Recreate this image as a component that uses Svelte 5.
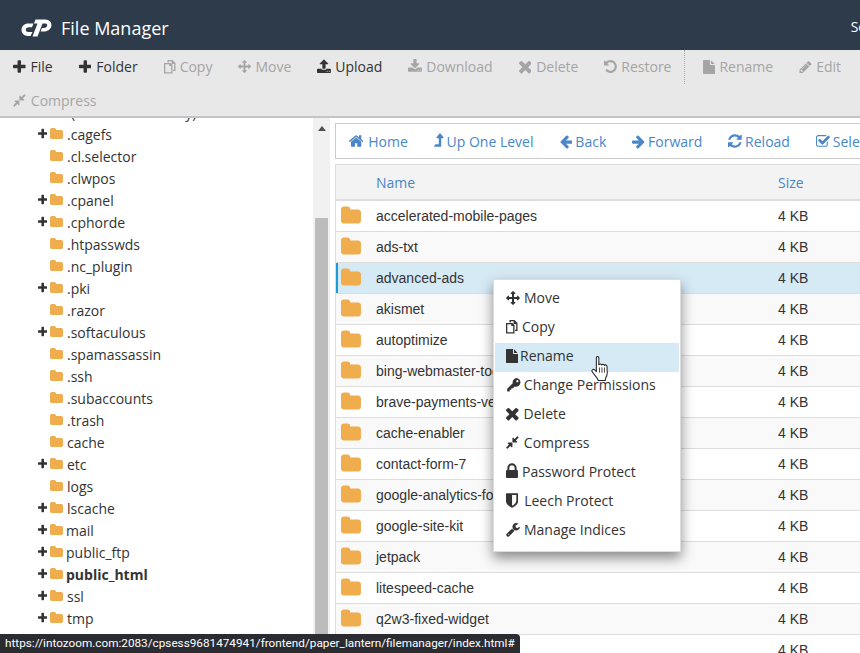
<script lang="ts">
	// font-awesome style glyphs, viewbox cropped to the glyph's own width
	const icons: Record<string, { d: string; x: number; w: number }> = {
		plus: { x: 192, w: 1408, d: 'M1600 736v192q0 40-28 68t-68 28h-416v416q0 40-28 68t-68 28h-192q-40 0-68-28t-28-68v-416h-416q-40 0-68-28t-28-68v-192q0-40 28-68t68-28h416v-416q0-40 28-68t68-28h192q40 0 68 28t28 68v416h416q40 0 68 28t28 68z' },
		times: { x: 302, w: 1188, d: 'M1490 1322q0 40-28 68l-136 136q-28 28-68 28t-68-28l-294-294-294 294q-28 28-68 28t-68-28l-136-136q-28-28-28-68t28-68l294-294-294-294q-28-28-28-68t28-68l136-136q28-28 68-28t68 28l294 294 294-294q28-28 68-28t68 28l136 136q28 28 28 68t-28 68l-294 294 294 294q28 28 28 68z' },
		folder: { x: 64, w: 1664, d: 'M1728 608v704q0 92-66 158t-158 66h-1216q-92 0-158-66t-66-158v-960q0-92 66-158t158-66h320q92 0 158 66t66 158v32h672q92 0 158 66t66 158z' },
		left: { x: 128, w: 1536, d: 'M1664 896v128q0 53-32.5 90.5t-84.5 37.5h-704l293 294q38 36 38 90t-38 90l-75 76q-37 37-90 37-52 0-91-37l-651-652q-37-37-37-90 0-52 37-91l651-650q38-38 91-38 52 0 90 38l75 74q38 38 38 91t-38 91l-293 293h704q52 0 84.5 37.5t32.5 90.5z' },
		right: { x: 128, w: 1536, d: 'M1600 960q0 54-37 91l-651 651q-39 37-91 37-51 0-90-37l-75-75q-38-38-38-91t38-91l293-293h-704q-52 0-84.5-37.5t-32.5-90.5v-128q0-53 32.5-90.5t84.5-37.5h704l-293-294q-38-36-38-90t38-90l75-75q38-38 90-38 53 0 91 38l651 651q37 35 37 90z' },
		refresh: { x: 128, w: 1536, d: 'M1639 1056q0 5-1 7-64 268-268 434.5t-478 166.5q-146 0-282.5-55t-243.5-157l-129 129q-19 19-45 19t-45-19-19-45v-448q0-26 19-45t45-19h448q26 0 45 19t19 45-19 45l-137 137q71 66 161 102t187 36q134 0 250-65t186-179q11-17 53-117 8-23 30-23h192q13 0 22.5 9.5t9.5 22.5zm25-800v448q0 26-19 45t-45 19h-448q-26 0-45-19t-19-45 19-45l138-138q-148-137-349-137-134 0-250 65t-186 179q-11 17-53 117-8 23-30 23h-199q-13 0-22.5-9.5t-9.5-22.5v-7q65-268 270-434.5t480-166.5q146 0 284 55.5t245 156.5l130-129q19-19 45-19t45 19 19 45z' },
		home: { x: 96, w: 1600, d: 'M1472 992v480q0 26-19 45t-45 19h-384v-384h-256v384h-384q-26 0-45-19t-19-45v-480q0-1 .5-3t.5-3l575-474 575 474q1 2 1 6zm223-69l-62 74q-8 9-21 11h-3q-13 0-21-7l-692-577-692 577q-12 8-24 7-13-2-21-11l-62-74q-8-10-7-23.5t11-21.5l719-599q32-26 76-26t76 26l244 204v-195q0-14 9-23t23-9h192q14 0 23 9t9 23v408l219 182q10 8 11 21.5t-7 23.5z' },
		lock: { x: 320, w: 1152, d: 'M640 768h512v-192q0-106-75-181t-181-75-181 75-75 181v192zm832 96v576q0 40-28 68t-68 28h-960q-40 0-68-28t-28-68v-576q0-40 28-68t68-28h32v-192q0-184 132-316t316-132 316 132 132 316v192h32q40 0 68 28t28 68z' },
		file: { x: 128, w: 1536, d: 'M1152 512v-472q22 14 36 28l408 408q14 14 28 36h-472zm-128 32q0 40 28 68t68 28h544v1056q0 40-28 68t-68 28h-1344q-40 0-68-28t-28-68v-1600q0-40 28-68t68-28h800v544z' },
		arrows: { x: 0, w: 1792, d: 'M1792 896q0 26-19 45l-256 256q-19 19-45 19t-45-19-19-45v-128h-384v384h128q26 0 45 19t19 45-19 45l-256 256q-19 19-45 19t-45-19l-256-256q-19-19-19-45t19-45 45-19h128v-384h-384v128q0 26-19 45t-45 19-45-19l-256-256q-19-19-19-45t19-45l256-256q19-19 45-19t45 19 19 45v128h384v-384h-128q-26 0-45-19t-19-45 19-45l256-256q19-19 45-19t45 19l256 256q19 19 19 45t-19 45-45 19h-128v384h384v-128q0-26 19-45t45-19 45 19l256 256q19 19 19 45z' },
		pencil: { x: 64, w: 1664, d: 'M491 1536l91-91-235-235-91 91v107h128v128h107zm523-928q0-22-22-22-10 0-17 7l-542 542q-7 7-7 17 0 22 22 22 10 0 17-7l542-542q7-7 7-17zm-54-192l416 416-832 832h-416v-416zm683 96q0 53-37 90l-166 166-416-416 166-165q36-38 90-38 53 0 91 38l235 234q37 39 37 91z' },
		undo: { x: 128, w: 1536, d: 'M1664 896q0 156-61 298t-164 245-245 164-298 61q-172 0-327-72.5t-264-204.5q-7-10-6.5-22.5t8.5-20.5l137-138q10-9 25-9 16 2 23 12 73 95 179 147t225 52q104 0 198.5-40.5t163.5-109.5 109.5-163.5 40.5-198.5-40.5-198.5-109.5-163.5-163.5-109.5-198.5-40.5q-98 0-188 35.5t-160 101.5l137 138q31 30 14 69-17 40-59 40h-448q-26 0-45-19t-19-45v-448q0-42 40-59 39-17 69 14l130 129q107-101 244.5-156.5t284.5-55.5q156 0 298 61t245 164 164 245 61 298z' },
		compress: { x: 128, w: 1536, d: 'M896 960v448q0 26-19 45t-45 19-45-19l-144-144-332 332q-10 10-23 10t-23-10l-114-114q-10-10-10-23t10-23l332-332-144-144q-19-19-19-45t19-45 45-19h448q26 0 45 19t19 45zm755-672q0 13-10 23l-332 332 144 144q19 19 19 45t-19 45-45 19h-448q-26 0-45-19t-19-45v-448q0-26 19-45t45-19 45 19l144 144 332-332q10-10 23-10t23 10l114 114q10 10 10 23z' },
		key: { x: 64, w: 1664, d: 'M1200 120a480 480 0 1 1-160 932l-200 200h-180v180h-180v180H200v-290l620-620A480 480 0 0 1 1200 120zM1340 340a120 120 0 1 0 .1 0z' },
		wrench: { x: 64, w: 1664, d: 'M448 1472q0-26-19-45t-45-19-45 19-19 45 19 45 45 19 45-19 19-45zm644-420l-682 682q-37 37-90 37-52 0-91-37l-106-108q-38-36-38-90 0-53 38-91l681-681q39 98 114.5 173.5t173.5 114.5zm634-435q0 39-23 106-47 134-164.5 217.5t-258.5 83.5q-185 0-316.5-131.5t-131.5-316.5 131.5-316.5 316.5-131.5q58 0 121.5 16.5t107.5 46.5q16 11 16 28t-16 28l-293 169v224l193 107q5-3 79-48.5t135.5-81 70.5-35.5q15 0 23.5 10t8.5 25z' },
		shield: { x: 256, w: 1280, d: 'M1344 960v-640h-448v1137q119-63 213-137 235-184 235-360zm192-768v768q0 86-33.5 170.5t-83 150-118 127.5-126.5 103-121 77.5-89.5 49.5-42.5 20q-12 6-26 6t-26-6q-16-7-42.5-20t-89.5-49.5-121-77.5-126.5-103-118-127.5-83-150-33.5-170.5v-768q0-26 19-45t45-19h1152q26 0 45 19t19 45z' },
		upload: { x: 64, w: 1664, d: 'M1344 1472q0-26-19-45t-45-19-45 19-19 45 19 45 45 19 45-19 19-45zm256 0q0-26-19-45t-45-19-45 19-19 45 19 45 45 19 45-19 19-45zm128-224v320q0 40-28 68t-68 28h-1472q-40 0-68-28t-28-68v-320q0-40 28-68t68-28h427q21 56 70.5 92t110.5 36h256q61 0 110.5-36t70.5-92h427q40 0 68 28t28 68zm-325-648q-17 40-59 40h-256v448q0 26-19 45t-45 19h-256q-26 0-45-19t-19-45v-448h-256q-42 0-59-40-17-39 14-69l448-448q18-19 45-19t45 19l448 448q31 30 14 69z' },
		download: { x: 64, w: 1664, d: 'M1344 1344q0-26-19-45t-45-19-45 19-19 45 19 45 45 19 45-19 19-45zm256 0q0-26-19-45t-45-19-45 19-19 45 19 45 45 19 45-19 19-45zm128-224v320q0 40-28 68t-68 28h-1472q-40 0-68-28t-28-68v-320q0-40 28-68t68-28h465l135 136q58 56 136 56t136-56l136-136h464q40 0 68 28t28 68zm-325-569q17 41-14 70l-448 448q-18 19-45 19t-45-19l-448-448q-31-29-14-70 17-39 59-39h256v-448q0-26 19-45t45-19h256q26 0 45 19t19 45v448h256q42 0 59 39z' },
		levelup: { x: 384, w: 1024, d: 'M1395 508q-17 36-58 36h-192v864q0 14-9 23t-23 9h-704q-21 0-29-18-8-20 4-35l160-192q9-11 25-11h320v-640h-192q-40 0-58-37-17-37 9-68l320-384q18-22 49-22t49 22l320 384q27 32 9 69z' },
		check: { x: 64, w: 1664, d: 'M1472 930v318q0 119-84.5 203.5t-203.5 84.5h-832q-119 0-203.5-84.5t-84.5-203.5v-832q0-119 84.5-203.5t203.5-84.5h832q63 0 117 25 15 7 18 23 3 17-9 29l-49 49q-10 10-23 10-3 0-9-2-23-6-45-6h-832q-66 0-113 47t-47 113v832q0 66 47 113t113 47h832q66 0 113-47t47-113v-254q0-13 9-22l64-64q10-10 23-10 6 0 12 3 20 8 20 29zm231-489l-814 814q-24 24-57 24t-57-24l-430-430q-24-24-24-57t24-57l110-110q24-24 57-24t57 24l263 263 647-647q24-24 57-24t57 24l110 110q24 24 24 57t-24 57z' },
		copy: { x: 0, w: 1536, d: 'M0 384h830l256 256v1088H0zM166 550v1012h754V770H670V550zM448 0h640l384 384v1024h-320v-166h154V500H976V166H614v154H448z' }
	};

	const tools = [
		{ icon: 'plus', label: 'File', h: 16, gap: 5, on: true },
		{ icon: 'plus', label: 'Folder', h: 16, gap: 5, on: true },
		{ icon: 'copy', label: 'Copy', h: 14, gap: 4 },
		{ icon: 'arrows', label: 'Move', h: 13, gap: 4 },
		{ icon: 'upload', label: 'Upload', h: 15, gap: 4, on: true },
		{ icon: 'download', label: 'Download', h: 15, gap: 4 },
		{ icon: 'times', label: 'Delete', h: 19, gap: 5 },
		{ icon: 'undo', label: 'Restore', h: 15, gap: 4, sep: true },
		{ icon: 'file', label: 'Rename', h: 14, gap: 4 },
		{ icon: 'pencil', label: 'Edit', h: 14, gap: 4 },
		{ icon: 'compress', label: 'Compress', h: 15, gap: 5 }
	];

	const nav = [
		{ icon: 'home', label: 'Home', h: 16, gap: 5 },
		{ icon: 'levelup', label: 'Up One Level', h: 17, gap: 3 },
		{ icon: 'left', label: 'Back', h: 15, gap: 3 },
		{ icon: 'right', label: 'Forward', h: 15, gap: 3 },
		{ icon: 'refresh', label: 'Reload', h: 16, gap: 3 },
		{ icon: 'check', label: 'Select All', h: 15, gap: 3 }
	];

	const tree = [
		{ name: '(/home/intozoomy)', cut: true },
		{ name: '.cagefs', plus: true },
		{ name: '.cl.selector' },
		{ name: '.clwpos' },
		{ name: '.cpanel', plus: true },
		{ name: '.cphorde', plus: true },
		{ name: '.htpasswds' },
		{ name: '.nc_plugin' },
		{ name: '.pki', plus: true },
		{ name: '.razor' },
		{ name: '.softaculous', plus: true },
		{ name: '.spamassassin' },
		{ name: '.ssh' },
		{ name: '.subaccounts' },
		{ name: '.trash' },
		{ name: 'cache' },
		{ name: 'etc', plus: true },
		{ name: 'logs' },
		{ name: 'lscache', plus: true },
		{ name: 'mail', plus: true, tight: true },
		{ name: 'public_ftp', plus: true, tight: true },
		{ name: 'public_html', plus: true, tight: true, bold: true },
		{ name: 'ssl', plus: true },
		{ name: 'tmp', plus: true }
	];

	const files = [
		'accelerated-mobile-pages',
		'ads-txt',
		'advanced-ads',
		'akismet',
		'autoptimize',
		'bing-webmaster-tools',
		'brave-payments-verified',
		'cache-enabler',
		'contact-form-7',
		'google-analytics-for-wp',
		'google-site-kit',
		'jetpack',
		'litespeed-cache',
		'q2w3-fixed-widget',
		'really-simple-ssl'
	];

	const menu = [
		{ icon: 'arrows', label: 'Move', h: 14, gap: 4 },
		{ icon: 'copy', label: 'Copy', h: 14, gap: 4 },
		{ icon: 'file', label: 'Rename', h: 14, gap: 2, active: true },
		{ icon: 'key', label: 'Change Permissions', h: 16, gap: 3 },
		{ icon: 'times', label: 'Delete', h: 19, gap: 5 },
		{ icon: 'compress', label: 'Compress', h: 15, gap: 5 },
		{ icon: 'lock', label: 'Password Protect', h: 18.6, gap: 4 },
		{ icon: 'shield', label: 'Leech Protect', h: 17, gap: 6 },
		{ icon: 'wrench', label: 'Manage Indices', h: 15, gap: 4 }
	];
</script>

{#snippet glyph(name: string, h: number)}
	<svg
		class="glyph"
		width={(icons[name].w / 1792) * h}
		height={h}
		viewBox="{icons[name].x} 0 {icons[name].w} 1792"
		fill="currentColor"
		aria-hidden="true"
	>
		<path d={icons[name].d} />
	</svg>
{/snippet}

<div class="page">
	<header class="top">
		<svg class="logo" width="31" height="18" viewBox="0 0 31 18" fill="#fff" aria-hidden="true">
			<path d="M12.500 4.500H7.500C3.500 4.500.5 7.200.5 10.800.5 14.500 3.200 17 7 17h2.500l2-4H7.300C5.500 13 4.600 12 4.800 10.600 5 9.200 6.200 8.300 8 8.300h3z" />
			<path d="M14.500.5H24c4.500 0 7 3 6.400 6.500C29.800 10 27 12.500 23 12.500h-3.500L21 9h2c1.700 0 3-1 3.200-2.500.2-1.500-.9-2-2.200-2h-2.500l-5 13h-5l5-13H13z" />
		</svg>
		<h1>File Manager</h1>
		<span class="search">Search</span>
	</header>

	<div class="toolbar">
		{#each tools as t}
			<button class="tool" class:on={t.on}>
				<span class="ticon" style="margin-right: {t.gap}px">{@render glyph(t.icon, t.h)}</span>
				<span>{t.label}</span>
			</button>
			{#if t.sep}
				<i class="sep"></i>
			{/if}
		{/each}
	</div>

	<div class="main">
		<aside class="tree">
			<ul>
				{#each tree as f}
					<li class:bold={f.bold} class:tight={f.tight}>
						<span class="toggle">
							{#if f.plus}
								{@render glyph('plus', 12)}
							{/if}
						</span>
						{#if !f.cut}
							<span class="tfolder">{@render glyph('folder', 14)}</span>
						{/if}
						<span class="tname" class:cut={f.cut}>{f.name}</span>
					</li>
				{/each}
			</ul>
		</aside>
		<div class="scrollbar">
			<i class="arrow"></i>
			<i class="thumb"></i>
		</div>

		<section class="content">
			<nav class="navbar">
				{#each nav as n}
					<a href="#nav">
						<span class="ticon" style="margin-right: {n.gap}px">{@render glyph(n.icon, n.h)}</span>
						<span>{n.label}</span>
					</a>
				{/each}
			</nav>
			<table>
				<thead>
					<tr>
						<th class="ci"></th>
						<th class="cn">Name</th>
						<th>Size</th>
					</tr>
				</thead>
				<tbody>
					{#each files as name, i}
						<tr class:picked={name === 'advanced-ads'} class:odd={i % 2 == 1}>
							<td class="ci">{@render glyph('folder', 21.5)}</td>
							<td class="cn">{name}</td>
							<td>4 KB</td>
						</tr>
					{/each}
				</tbody>
			</table>
		</section>
	</div>

	<ul class="menu">
		{#each menu as m}
			<li class:active={m.active}>
				<span class="ticon" style="margin-right: {m.gap}px">{@render glyph(m.icon, m.h)}</span>
				{m.label}
			</li>
		{/each}
	</ul>

	<svg class="cursor" width="19" height="26" viewBox="0 0 18 25" aria-hidden="true">
		<path
			d="M5 1.500c0-1.300 2.400-1.300 2.400 0v7c.2-1 2.600-1.100 2.700.2.200-1 2.500-1 2.600.4.400-.9 2.400-.7 2.500.8l.3 5.500c.1 2.400-.6 4.200-1.600 6l-.3 2.100H6.700c-.3-2-1.400-3-3-4.800L1 15c-.9-1.400 1.200-3 2.500-1.700L5 15z"
			fill="#fff"
			stroke="#222"
			stroke-width="1"
			stroke-linejoin="round"
		/>
		<path d="M8 11v5M10.400 11v5M12.800 11v5" stroke="#222" stroke-width=".8" />
	</svg>

	<div class="status">https://intozoom.com:2083/cpsess9681474941/frontend/paper_lantern/filemanager/index.html#</div>
</div>

<style>
	:global(body) {
		margin: 0;
		background: #fff;
	}
	.page {
		position: relative;
		width: 860px;
		height: 653px;
		overflow: hidden;
		font-family: 'Open Sans', sans-serif;
		font-size: 14px;
		color: #333;
	}
	.glyph {
		display: block;
		flex: none;
	}
	.ticon {
		display: block;
		flex: none;
	}

	.top {
		display: flex;
		align-items: center;
		height: 50px;
		padding: 0 0 0 21px;
		box-sizing: border-box;
		background: #2d3b4b;
		color: #fff;
		white-space: nowrap;
	}
	.logo {
		flex: none;
		margin: 6px 9px 0 0;
	}
	h1 {
		margin: 6px 0 0;
		font-size: 18px;
		font-weight: 400;
	}
	.search {
		margin: 2px -35px 0 auto;
	}

	.toolbar {
		display: flex;
		flex-wrap: wrap;
		align-items: flex-start;
		align-content: flex-start;
		height: 68px;
		box-sizing: border-box;
		background: #e8e8e8;
		border-bottom: 2px solid #c4c4c8;
	}
	.tool {
		display: flex;
		align-items: center;
		height: 34px;
		padding: 0 13px 1px;
		border: 0;
		background: none;
		font: inherit;
		color: #a5a5a5;
	}
	.tool.on {
		color: #333;
	}
	.sep {
		width: 0;
		height: 34px;
		margin-right: 5px;
		border-left: 1px dotted #aaa;
	}

	.main {
		display: flex;
		height: 535px;
		overflow: hidden;
	}
	.tree {
		width: 313px;
		flex: none;
		overflow: hidden;
	}
	.tree ul {
		list-style: none;
		margin: -17px 0 0;
		padding: 0 0 0 38px;
	}
	.tree li {
		display: flex;
		align-items: center;
		height: 22px;
		white-space: nowrap;
	}
	.toggle {
		width: 12px;
		flex: none;
		color: #333;
	}
	.tfolder {
		color: #f0ad4e;
		margin-right: 4px;
	}
	.tight .tfolder {
		margin-right: 3px;
	}
	.bold {
		font-weight: 700;
	}
	.cut {
		padding-left: 21px;
	}

	.scrollbar {
		display: flex;
		flex-direction: column;
		align-items: center;
		width: 17px;
		flex: none;
		background: #f1f1f1;
	}
	.arrow {
		margin-top: 8px;
		border: 4px solid transparent;
		border-top: 0;
		border-bottom: 5px solid #505050;
	}
	.thumb {
		width: 13px;
		flex: 1;
		margin-top: 87px;
		background: #bcbcbc;
	}

	.content {
		flex: none;
		width: 700px;
		margin-left: 5px;
		padding-top: 5px;
	}
	.navbar {
		display: flex;
		align-items: center;
		height: 36px;
		box-sizing: border-box;
		border: 1px solid #ccc;
		margin-bottom: 5px;
		white-space: nowrap;
	}
	.navbar a {
		display: flex;
		align-items: center;
		padding: 0 13px;
		color: #4a86c8;
		text-decoration: none;
	}
	table {
		width: 700px;
		border-collapse: collapse;
		table-layout: fixed;
		border-left: 1px solid #ddd;
		border-top: 1px solid #ddd;
		font-family: 'Liberation Sans', sans-serif;
	}
	th {
		height: 34px;
		padding: 0;
		background: #f3f3f3;
		border-bottom: 2px solid #ddd;
		text-align: left;
		font-weight: 400;
		font-family: 'Open Sans', sans-serif;
		color: #4a86c8;
	}
	td {
		height: 30px;
		padding: 0;
		border-bottom: 1px solid #ddd;
	}
	.ci {
		width: 40.5px;
		padding-left: 5px;
		box-sizing: border-box;
		color: #f0ad4e;
	}
	.cn {
		width: 402px;
	}
	.odd {
		background: #f9f9f9;
	}
	.picked {
		background: #d6eaf6;
	}
	.picked .ci {
		box-shadow: inset 2px 0 0 #1b9ad6;
	}

	.menu {
		position: absolute;
		left: 493px;
		top: 279px;
		width: 188px;
		height: 273px;
		box-sizing: border-box;
		margin: 0;
		padding: 5px 1px;
		list-style: none;
		background: #fff;
		border: 1px solid #ddd;
		box-shadow: 0 6px 12px rgba(0, 0, 0, 0.45);
	}
	.menu li {
		display: flex;
		align-items: center;
		height: 29px;
		box-sizing: border-box;
		padding: 0 0 4px 11px;
		white-space: nowrap;
	}
	.menu .active {
		background: #d6eaf6;
	}
	.cursor {
		position: absolute;
		left: 591px;
		top: 356px;
	}
	.status {
		position: absolute;
		left: 0;
		bottom: 0;
		height: 19px;
		padding: 0 5px;
		background: #2a2c32;
		border-top-right-radius: 4px;
		color: #fff;
		font-family: Roboto, sans-serif;
		font-size: 11.75px;
		line-height: 19px;
		white-space: nowrap;
	}
</style>
